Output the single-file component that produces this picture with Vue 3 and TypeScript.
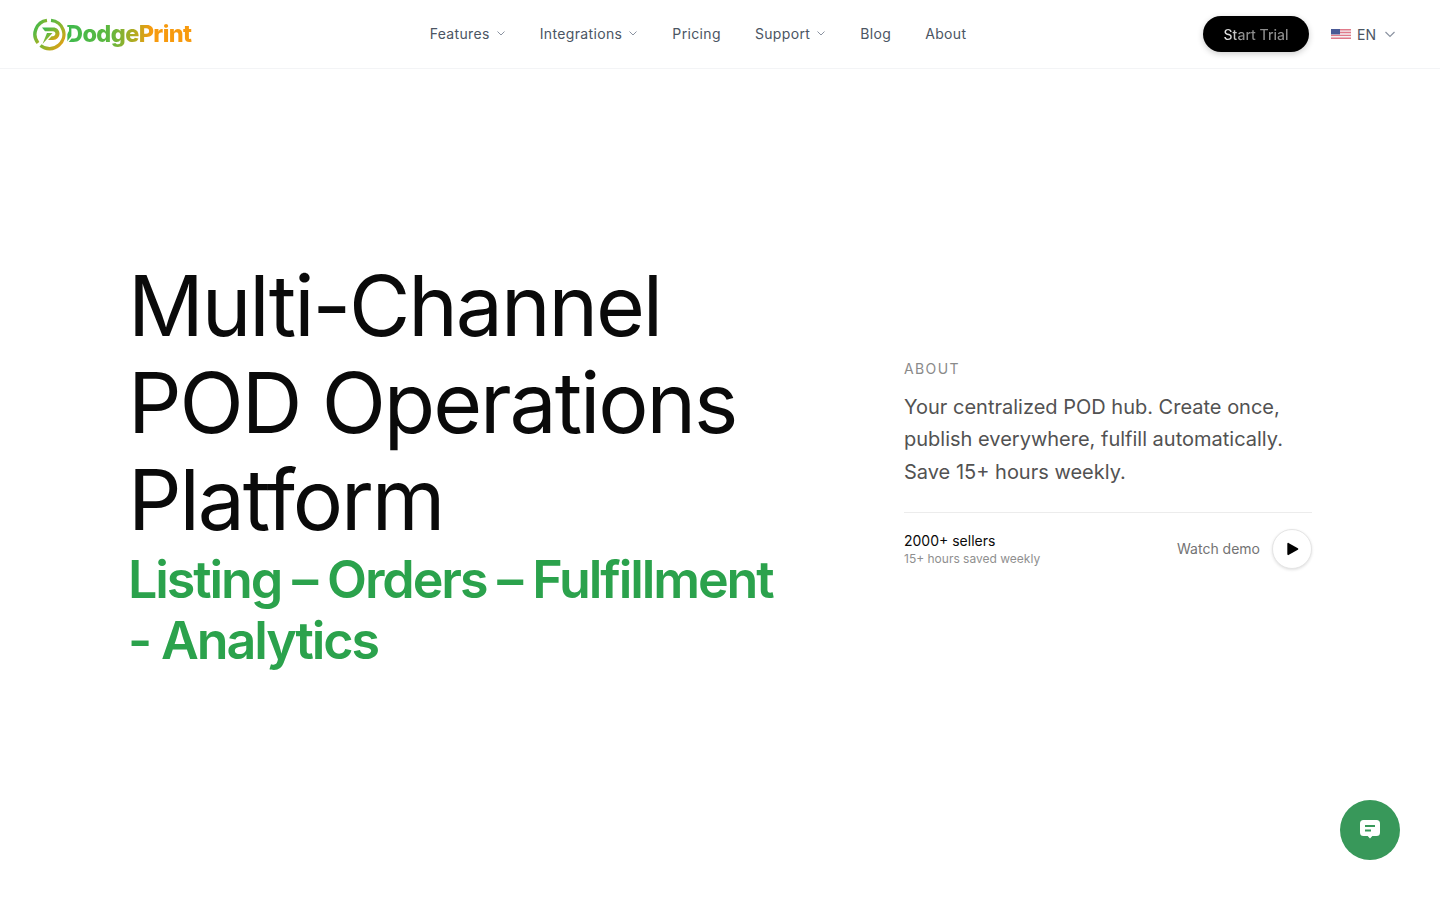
<script setup lang="ts">
const navItems = [
  { label: 'Features', caret: true },
  { label: 'Integrations', caret: true },
  { label: 'Pricing', caret: false },
  { label: 'Support', caret: true },
  { label: 'Blog', caret: false },
  { label: 'About', caret: false },
];
</script>

<template>
  <div class="page">
    <header class="header">
      <a class="logo" href="#">
        <svg class="logo-mark" width="33" height="33" viewBox="0 0 33 33" fill="none">
          <defs>
            <linearGradient id="lg" x1="0" y1="0" x2="1" y2="1">
              <stop offset="0.1" stop-color="#3dba4e" />
              <stop offset="0.55" stop-color="#8fb52c" />
              <stop offset="1" stop-color="#f79a0e" />
            </linearGradient>
          </defs>
          <path d="M14 2.400A14 14 0 0 0 5 25" stroke="url(#lg)" stroke-width="3.400" />
          <path d="M18 2.400A14 14 0 0 1 26 27A14 14 0 0 1 7.500 27.500" stroke="url(#lg)" stroke-width="3.400" />
          <path d="M9 9.500h11c4 0 6.500 2.700 6.500 6s-2.500 6.500-6.500 6.500h-5l3.600-3.800h1.400c1.500 0 2.400-1.100 2.400-2.600s-.9-2.400-2.400-2.400H12z" fill="url(#lg)" />
          <path d="M14 15h5.500L9.500 26z" fill="url(#lg)" />
        </svg>
        <span class="logo-word">
          <span class="logo-text">DodgePrint</span>
          <svg class="logo-notch" width="14" height="18" viewBox="0 0 14 18" fill="none">
            <path d="M0 17 9 6" stroke="#fff" stroke-width="1.600" />
            <path d="M0 9 0 0h3v4z" fill="#fff" />
          </svg>
        </span>
      </a>

      <nav class="nav">
        <a v-for="item in navItems" :key="item.label" class="nav-item" href="#">
          {{ item.label }}
          <svg v-if="item.caret" width="10" height="10" viewBox="0 0 10 10" fill="none">
            <path d="M1.500 3.500 5 7l3.500-3.500" stroke="#8b93a1" stroke-width="1" />
          </svg>
        </a>
      </nav>

      <div class="actions">
        <button class="trial"><span>Start Trial</span></button>
        <div class="lang">
          <svg class="flag" width="20" height="10" viewBox="0 0 20 10">
            <rect width="20" height="10" rx="1" fill="#f4f0f2" />
            <path d="M0 0h20v1.400H0zM0 2.800h20v1.400H0zM0 5.700h20v1.400H0zM0 8.600h20V10H0z" fill="#e07a8a" />
            <rect width="9" height="5.400" fill="#4a5a96" />
          </svg>
          <span>EN</span>
          <svg width="12" height="12" viewBox="0 0 12 12" fill="none">
            <path d="M1.500 4 6 8.500 10.500 4" stroke="#8b93a1" stroke-width="1.200" />
          </svg>
        </div>
      </div>
    </header>

    <main class="hero">
      <div class="hero-left">
        <h1 class="title">Multi-Channel POD Operations Platform</h1>
        <h2 class="subtitle">Listing – Orders – Fulfillment - Analytics</h2>
      </div>

      <div class="hero-right">
        <div class="eyebrow">ABOUT</div>
        <p class="about">Your centralized POD hub. Create once, publish everywhere, fulfill automatically. Save 15+ hours weekly.</p>
        <div class="stats">
          <div>
            <div class="sellers">2000+ sellers</div>
            <div class="saved">15+ hours saved weekly</div>
          </div>
          <a class="watch" href="#">
            <span class="watch-label">Watch demo</span>
            <span class="play">
              <svg width="14" height="14" viewBox="0 0 12 12">
                <path d="M2 1.400c0-.5.5-.8 1-.6l8 4.500c.5.300.5 1 0 1.300l-8 4.600c-.5.200-1-.1-1-.6z" fill="#000" />
              </svg>
            </span>
          </a>
        </div>
      </div>
    </main>

    <button class="chat" aria-label="Chat">
      <svg width="20" height="20" viewBox="0 0 20 20">
        <path fill-rule="evenodd" d="M3.500 0h13A3.500 3.500 0 0 1 20 3.500v9a3.500 3.500 0 0 1-3.500 3.500h-4.200L10 18.600 7.700 16H3.500A3.500 3.500 0 0 1 0 12.500v-9A3.500 3.500 0 0 1 3.500 0zM5 5v2h10V5zm0 4.500v2h6v-2z" fill="#fff" />
      </svg>
    </button>
  </div>
</template>

<style>
html,
body {
  margin: 0;
  background: #fff;
}
</style>

<style scoped>
.page {
  min-height: 900px;
  font-family: Inter, "Liberation Sans", sans-serif;
  color: #0a0a0a;
  background: #fff;
}

a {
  text-decoration: none;
  color: inherit;
}

.header {
  height: 68px;
  border-bottom: 1px solid #f3f4f6;
  display: grid;
  grid-template-columns: 1fr auto 1fr;
  align-items: center;
  padding: 0 44px 0 33px;
}

.logo {
  display: flex;
  align-items: center;
}

.logo-word {
  position: relative;
  display: block;
  padding-bottom: 2px;
}

.logo-text {
  font-size: 23.500px;
  font-weight: 800;
  letter-spacing: -0.6px;
  background: linear-gradient(90deg, #3dba4e 0%, #5fb83f 35%, #b5aa20 55%, #f79a0e 68%, #f79a0e 100%);
  -webkit-background-clip: text;
  background-clip: text;
  color: transparent;
}

.logo-notch {
  position: absolute;
  left: 0;
  top: 8px;
}

.nav {
  display: flex;
  gap: 34px;
  margin-left: -33px;
  padding-bottom: 2px;
}

.nav-item {
  display: flex;
  align-items: center;
  gap: 6px;
  font-size: 14px;
  letter-spacing: 0.35px;
  color: #4b5563;
}

.actions {
  display: flex;
  justify-content: flex-end;
  align-items: center;
  gap: 22px;
}

.trial {
  width: 106px;
  height: 36px;
  border: 0;
  border-radius: 18px;
  background: #000;
  box-shadow: 0 2px 6px rgba(0, 0, 0, 0.2);
  font-family: inherit;
  font-size: 14px;
  font-weight: 500;
}

.trial span {
  background: linear-gradient(90deg, #e8e8e8 0%, #d0d0d0 14%, #8c8c8c 30%, #8c8c8c 100%);
  -webkit-background-clip: text;
  background-clip: text;
  color: transparent;
}

.lang {
  display: flex;
  align-items: center;
  gap: 6px;
  font-size: 14px;
  color: #4b5563;
}

.lang svg:last-child {
  margin-left: 2px;
}

.hero {
  display: grid;
  grid-template-columns: 660px 408px;
  justify-content: space-between;
  align-items: center;
  padding: 188px 128px 0 128px;
}

.title {
  margin: 0;
  font-size: 84px;
  font-weight: 400;
  line-height: 97px;
  letter-spacing: -2.1px;
  color: #0a0a0a;
  width: 640px;
}

.subtitle {
  margin: 1px 0 0;
  font-size: 52px;
  font-weight: 600;
  line-height: 61px;
  letter-spacing: -2.1px;
  color: #2ba24c;
}

.hero-right {
  margin-top: 1px;
}

.eyebrow {
  font-size: 14px;
  letter-spacing: 1.400px;
  color: #8a8a8a;
  line-height: 17px;
}

.about {
  margin: 14px 0 24px;
  font-size: 20px;
  line-height: 32.500px;
  color: #525252;
}

.stats {
  border-top: 1px solid #ececec;
  padding-top: 16px;
  display: flex;
  justify-content: space-between;
  align-items: center;
}

.sellers {
  font-size: 14px;
  line-height: 20px;
  color: #0a0a0a;
}

.saved {
  font-size: 12px;
  line-height: 16px;
  color: #8f8f8f;
}

.watch {
  display: flex;
  align-items: center;
  gap: 12px;
  font-size: 14px;
  color: #737373;
}

.watch-label {
  padding-bottom: 1px;
}

.play {
  width: 38px;
  height: 38px;
  border: 1px solid #e5e5e5;
  border-radius: 50%;
  box-shadow: 0 1px 3px rgba(0, 0, 0, 0.12);
  display: flex;
  align-items: center;
  justify-content: center;
  background: #fff;
}

.chat {
  position: fixed;
  right: 40px;
  bottom: 40px;
  width: 60px;
  height: 60px;
  border: 0;
  border-radius: 50%;
  background: #38985a;
  display: flex;
  align-items: center;
  justify-content: center;
}
</style>
